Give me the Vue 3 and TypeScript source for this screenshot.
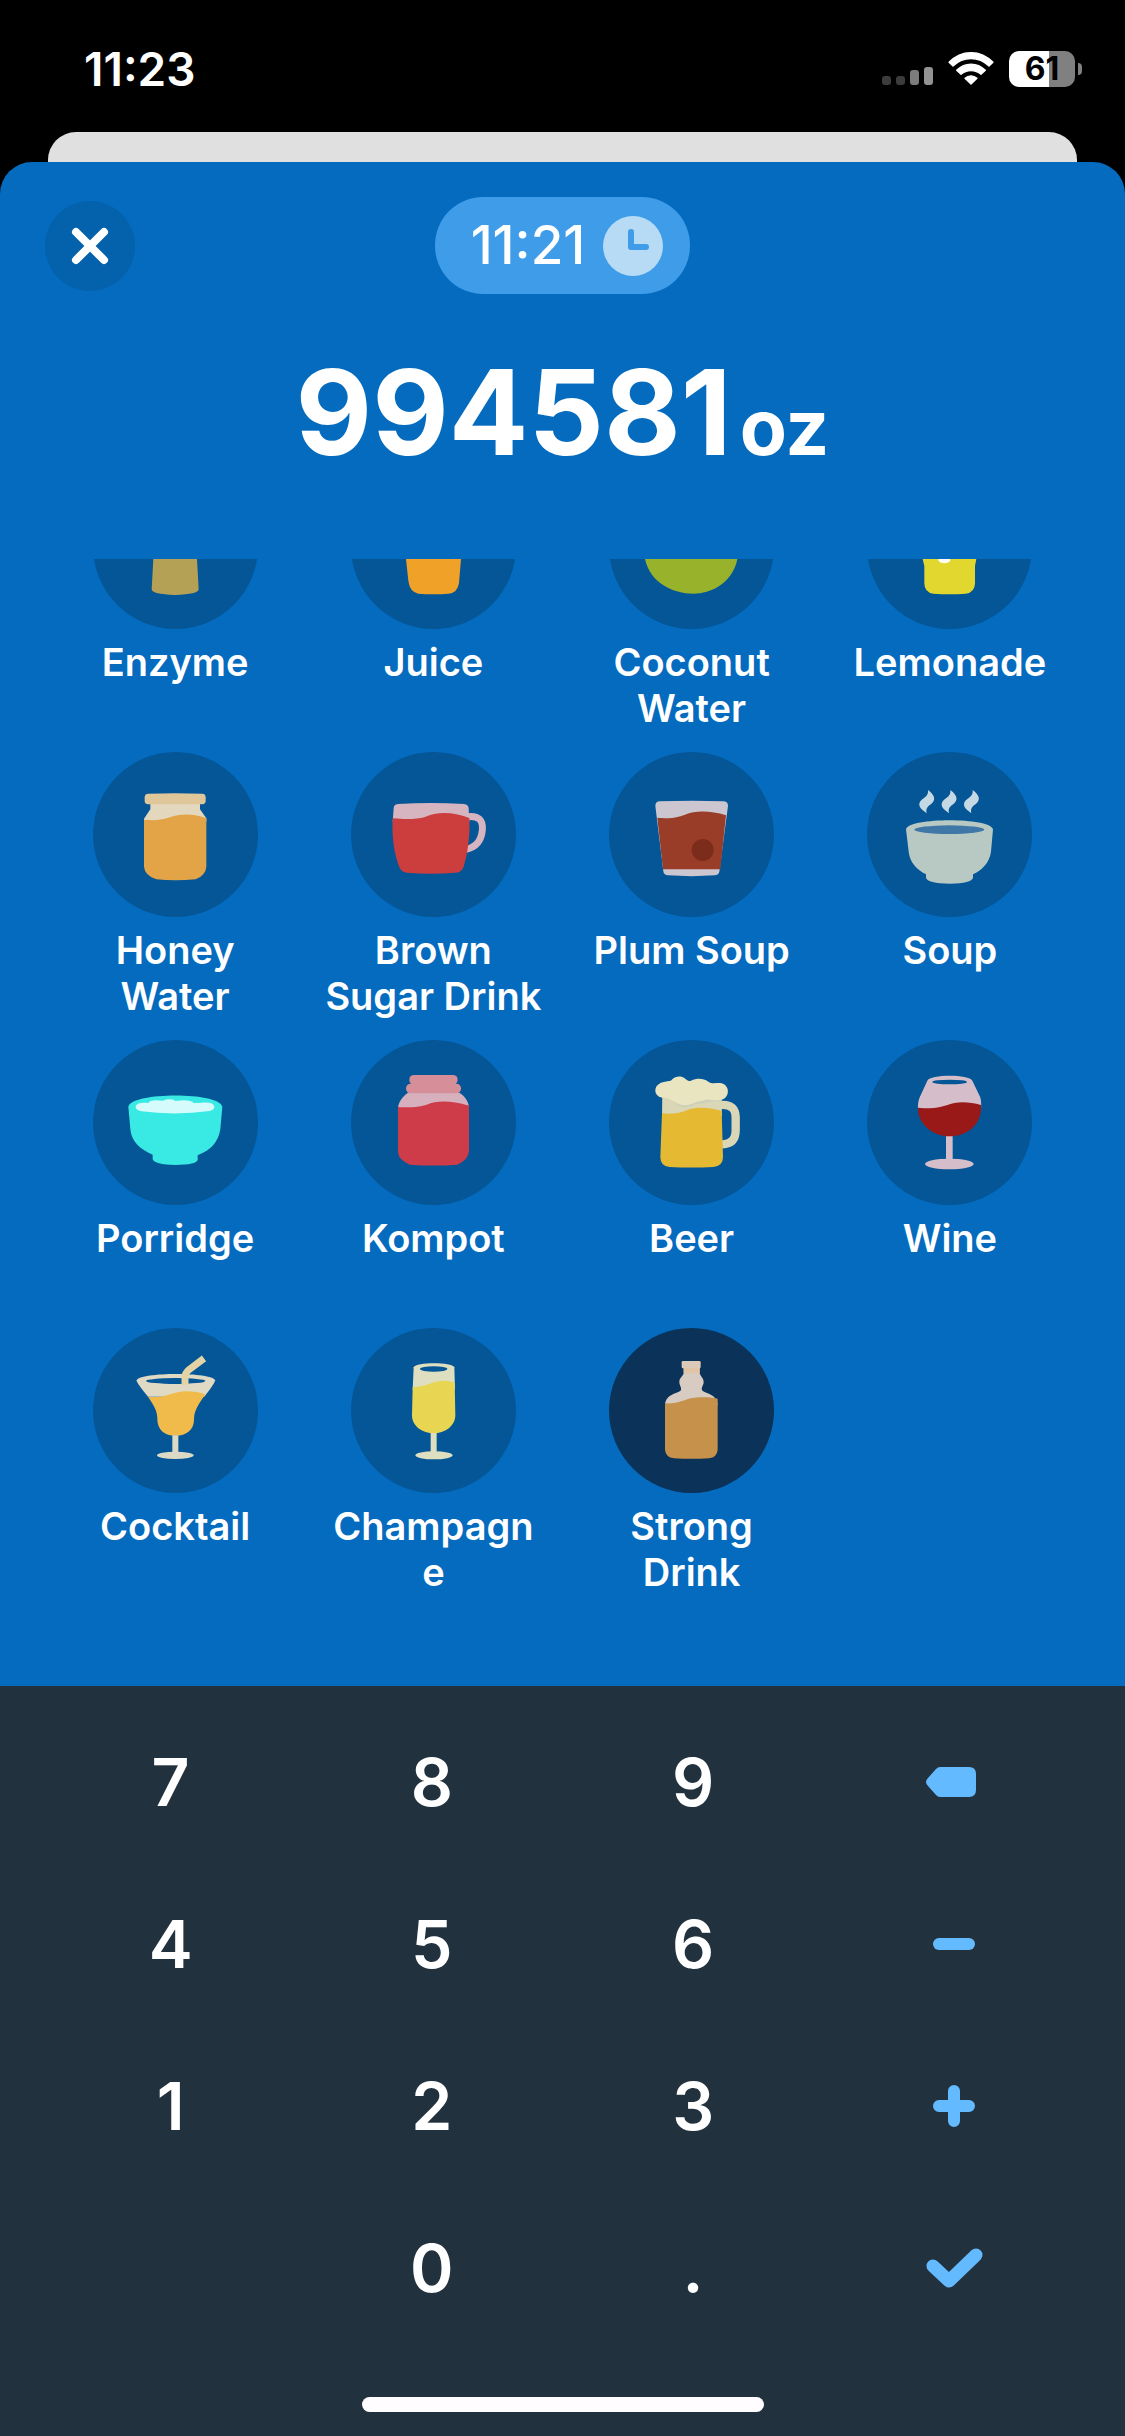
<script setup lang="ts">
import { onMounted, ref } from 'vue'

interface Layer {
  d: string
  fill?: string
  stroke?: string
  width?: number
}

interface Drink {
  name: string
  box: string
  layers: Layer[]
}

type KeyIcon = 'erase' | 'minus' | 'plus' | 'check'

interface Key {
  label: string
  icon?: KeyIcon
  blank?: boolean
}

const SHADE = '#045697'

const oval = (cx: number, cy: number, rx: number, ry: number): string =>
  `M${cx - rx} ${cy}a${rx} ${ry} 0 1 0 ${rx * 2} 0a${rx} ${ry} 0 1 0 ${-rx * 2} 0Z`

const block = (x: number, y: number, w: number, h: number, r: number): string =>
  `M${x + r} ${y}h${w - 2 * r}a${r} ${r} 0 0 1 ${r} ${r}v${h - 2 * r}a${r} ${r} 0 0 1 ${-r} ${r}h${2 * r - w}a${r} ${r} 0 0 1 ${-r} ${-r}v${2 * r - h}a${r} ${r} 0 0 1 ${r} ${-r}Z`

const steam = (dx: number): string =>
  `M${1044 + dx} 150c28 22 20 35 4 46c-9 8 -10 14 -8 24c-30 -20 -26 -33 -9 -45c12 -9 14 -15 13 -25Z`

const drinks: Drink[] = [
  {
    name: 'Enzyme',
    box: '100 -228 495 495',
    layers: [{ d: 'M284 0H409L412 57L417 148Q416 163 346 165Q277 163 276 148L281 57Z', fill: '#b5a156' }],
  },
  {
    name: 'Juice',
    box: '873 -228 495 495',
    layers: [{ d: 'M1032 -40H1209L1203 57L1197 128Q1193 158 1166 161Q1120 164 1075 161Q1049 155 1045 122L1038 57Z', fill: '#f0a228' }],
  },
  {
    name: 'Coconut Water',
    box: '87 -228 495 495',
    layers: [{ d: 'M190 20H475C478 120 400 161 340 161C270 161 188 118 192 20Z', fill: '#98b22b' }],
  },
  {
    name: 'Lemonade',
    box: '861 -228 495 495',
    layers: [
      { d: 'M1020 0L1028 57L1033 78V130Q1033 158 1060 161Q1110 164 1157 161Q1185 158 1185 130V78L1189 57L1196 0Z', fill: '#e1d72f' },
      { d: oval(1093, 60, 18, 10), fill: '#ffffff' },
    ],
  },
  {
    name: 'Honey Water',
    box: '100 36 495 495',
    layers: [
      { d: 'M272 190H421V208L440 235V246H253V236L272 208Z', fill: '#e3d8bd' },
      { d: 'M255 172Q255 162 265 161Q346 158 428 161Q438 162 438 172V182Q438 192 428 193H265Q255 192 255 182Z', fill: '#e0c79a' },
      { d: 'M253 239C290 243 310 238 335 230C370 219 410 222 440 235V380Q438 406 408 418Q346 424 290 418Q255 406 253 380Z', fill: '#e3a447' },
    ],
  },
  {
    name: 'Brown Sugar Drink',
    box: '873 36 495 495',
    layers: [
      { d: 'M1224 230C1256 226 1270 242 1267 270C1264 302 1248 322 1218 328', stroke: '#d6b4c0', width: 21 },
      { d: 'M1001 205Q1001 193 1014 192Q1113 186 1212 192Q1225 193 1226 205L1228 245H998Z', fill: '#d6b4c0' },
      { d: 'M998 235C1040 239 1070 238 1095 231C1130 216 1175 214 1228 234C1231 290 1222 345 1211 380Q1205 396 1188 398Q1113 404 1040 398Q1024 396 1018 382C1002 340 995 290 998 235Z', fill: '#cb3e3d' },
    ],
  },
  {
    name: 'Plum Soup',
    box: '87 36 495 495',
    layers: [
      { d: 'M226 198Q226 185 238 184Q335 180 432 184Q444 185 444 198L418 395Q416 405 404 406Q335 411 264 406Q251 405 250 394Z', fill: '#ccc6d0' },
      { d: 'M232 233C275 237 290 232 315 224C345 212 390 211 438 226L421 388H249Z', fill: '#9a3d28' },
      { d: oval(368, 330, 33, 33), fill: '#7c2c1b' },
    ],
  },
  {
    name: 'Soup',
    box: '861 36 495 495',
    layers: [
      { d: steam(0), fill: '#c4d9e3' },
      { d: steam(67), fill: '#c4d9e3' },
      { d: steam(134), fill: '#c4d9e3' },
      { d: 'M978 268C985 232 1232 232 1239 268L1233 335C1228 370 1205 390 1179 403V413Q1175 430 1110 431Q1042 430 1038 413V403C1010 388 990 368 986 335Z', fill: '#b8c9c3' },
      { d: oval(1108, 269, 105, 13), fill: '#3f78a6' },
    ],
  },
  {
    name: 'Porridge',
    box: '100 30 495 495',
    layers: [
      { d: 'M206 230C215 185 480 185 488 230L482 298C476 335 455 360 414 376V390Q410 404 347 405Q284 404 279 388V374C240 358 216 335 212 298Z', fill: '#39e9e3' },
      { d: 'M228 232C228 218 250 217 266 219C270 209 290 210 310 212C330 204 345 210 347 213C370 209 395 209 402 219C425 220 440 214 455 220C468 228 468 238 450 243Q347 257 245 244Q228 240 228 232Z', fill: '#d6fbfc' },
    ],
  },
  {
    name: 'Kompot',
    box: '873 30 495 495',
    layers: [
      { d: 'M1044 188H1198C1214 198 1226 214 1227 234H1014C1016 212 1030 198 1044 188Z', fill: '#d6b0bc' },
      { d: block(1048, 135, 145, 29, 14), fill: '#d68e99' },
      { d: block(1038, 161, 165, 29, 14), fill: '#d68e99' },
      { d: 'M1014 231C1050 233 1070 233 1100 224C1130 211 1170 210 1227 227V362Q1226 388 1192 404Q1120 409 1050 404Q1015 390 1014 365Z', fill: '#cf3c49' },
    ],
  },
  {
    name: 'Beer',
    box: '87 30 495 495',
    layers: [
      { d: 'M422 225C455 223 467 237 467 262V300C467 330 452 342 426 343', stroke: '#dad7b7', width: 25 },
      { d: 'M247 185H424L426 260H246Z', fill: '#dad7b7' },
      { d: 'M275 203C285 232 320 240 345 222C365 225 385 212 424 212V190H275Z', fill: '#cfd0b9' },
      { d: 'M246 250C280 253 300 249 325 239C350 231 385 231 425 243L429 382Q429 408 400 411Q335 414 268 411Q241 408 241 382Z', fill: '#e5b931' },
      { d: 'M247 203C218 198 218 160 255 155C265 154 273 154 277 148C287 137 305 137 314 145C320 150 325 155 333 152C350 144 370 144 385 155C395 162 405 159 420 159C452 162 452 207 420 210C400 213 385 203 368 212C340 215 335 228 305 225C280 218 275 203 247 203Z', fill: '#e9e5c1' },
    ],
  },
  {
    name: 'Wine',
    box: '861 30 495 495',
    layers: [
      { d: 'M1042 152C1050 132 1168 132 1177 152L1199 198C1204 208 1204 220 1203 240H1014C1013 215 1018 204 1022 196Z', fill: '#d5beca' },
      { d: oval(1109, 156, 52, 7), fill: SHADE },
      { d: block(1098, 312, 20, 84, 0), fill: '#d5beca' },
      { d: oval(1108, 402, 73, 16), fill: '#d5beca' },
      { d: 'M1014 233C1050 236 1070 236 1100 226C1130 213 1165 214 1203 225C1207 285 1160 319 1109 319C1055 318 1013 280 1014 233Z', fill: '#981918' },
    ],
  },
  {
    name: 'Cocktail',
    box: '0 0 495 495',
    layers: [
      { d: 'M131 157C140 132 358 132 366 157Q366 166 334 206H165Q131 166 131 157Z', fill: '#e0dac4' },
      { d: oval(248, 159, 89, 9), fill: SHADE },
      { d: 'M276 170V148Q276 135 288 125L333 91', stroke: '#e3d3a5', width: 21 },
      { d: 'M165 206C205 210 215 203 245 195C275 186 310 190 337 199C320 225 303 245 303 275C303 305 280 323 248 323C214 323 193 305 193 272C193 245 180 230 165 206Z', fill: '#f1bb4b' },
      { d: block(238, 322, 18, 56, 0), fill: '#dcdac5' },
      { d: oval(247, 382, 55, 11), fill: '#dcdac5' },
    ],
  },
  {
    name: 'Champagne',
    box: '0 0 495 495',
    layers: [
      { d: 'M188 118C195 102 303 102 310 118L312 185H185Z', fill: '#dedfc0' },
      { d: oval(248, 123, 41, 8), fill: SHADE },
      { d: 'M185 178C210 176 225 172 240 166C260 157 285 156 311 164L313 262C313 295 280 316 249 316C215 316 183 295 183 262Z', fill: '#e8d653' },
      { d: block(239, 315, 18, 62, 0), fill: '#dedfc0' },
      { d: oval(249, 382, 56, 12), fill: '#dedfc0' },
    ],
  },
  {
    name: 'Strong Drink',
    box: '0 0 495 495',
    layers: [
      { d: 'M224 118H272V136C274 145 284 150 284 162C284 172 276 178 279 186C285 198 324 194 326 232H168C170 194 210 198 216 186C218 178 211 172 211 162C211 150 222 145 224 136Z', fill: '#d8cbc1' },
      { d: block(224, 118, 48, 18, 0), fill: '#e0c4a4' },
      { d: block(218, 99, 57, 22, 4), fill: '#ddc9b8' },
      { d: 'M168 226C200 228 215 220 235 214C260 206 300 207 326 212V365Q324 388 300 391Q248 394 195 391Q170 388 168 365Z', fill: '#c6914b' },
    ],
  },
]

const keys: Key[] = [
  { label: '7' },
  { label: '8' },
  { label: '9' },
  { label: 'Erase', icon: 'erase' },
  { label: '4' },
  { label: '5' },
  { label: '6' },
  { label: 'Subtract', icon: 'minus' },
  { label: '1' },
  { label: '2' },
  { label: '3' },
  { label: 'Add', icon: 'plus' },
  { label: '', blank: true },
  { label: '0' },
  { label: '.' },
  { label: 'Confirm', icon: 'check' },
]

const amount = ref('994581')
const selected = ref('Strong Drink')
const list = ref<HTMLElement | null>(null)

function press(key: Key): void {
  if (key.icon === 'erase') amount.value = amount.value.slice(0, -1)
  else if (!key.icon) amount.value += key.label
}

// The chosen drink sits in the last row, so the list opens scrolled to its end.
onMounted(() => {
  if (list.value) list.value.scrollTop = list.value.scrollHeight
})
</script>

<template>
  <div class="screen">
    <div class="status">
      <span class="status-time">11:23</span>
      <div class="status-icons">
        <svg class="signal" viewBox="0 0 51 36" aria-hidden="true">
          <rect x="0" y="25" width="9" height="9" rx="3" fill="#3c3c3c" />
          <rect x="14" y="25" width="9" height="9" rx="3" fill="#3c3c3c" />
          <rect x="28" y="19" width="9" height="15" rx="3" fill="#7c7c7c" />
          <rect x="42" y="16" width="9" height="18" rx="3" fill="#929292" />
        </svg>
        <svg class="wifi" viewBox="264 63 138 108" aria-hidden="true">
          <g fill="#fff" stroke="#fff" stroke-width="4" stroke-linejoin="round">
            <path d="M267 97C304 58 362 58 399 97L387 108C356 78 310 78 279 108Z" />
            <path d="M290 121C315 96 351 96 376 121L363 133C346 118 320 118 303 133Z" />
            <path d="M315 145C326 135 340 135 351 145L333 162Z" />
          </g>
        </svg>
        <div class="battery-wrap">
          <span class="battery">61</span>
          <span class="battery-cap"></span>
        </div>
      </div>
    </div>

    <div class="behind"></div>

    <main class="sheet">
      <header class="top">
        <button class="close" type="button" aria-label="Close">
          <svg viewBox="0 0 38 38" aria-hidden="true">
            <path d="M5 5L33 33M33 5L5 33" stroke="#fff" stroke-width="8" stroke-linecap="round" />
          </svg>
        </button>
        <button class="time-pill" type="button">
          <span>11:21</span>
          <svg viewBox="0 0 60 60" aria-hidden="true">
            <circle cx="30" cy="30" r="30" fill="#b7daf5" />
            <path d="M28 16V31H43" fill="none" stroke="#3e9ce9" stroke-width="6" stroke-linecap="round" stroke-linejoin="round" />
          </svg>
        </button>
      </header>

      <p class="amount">{{ amount }}<span class="unit">oz</span></p>

      <div ref="list" class="list">
        <div class="drinks">
          <button
            v-for="drink in drinks"
            :key="drink.name"
            class="drink"
            :class="{ selected: drink.name === selected }"
            type="button"
            @click="selected = drink.name"
          >
            <svg class="drink-icon" :viewBox="drink.box" aria-hidden="true">
              <path
                v-for="(layer, i) in drink.layers"
                :key="i"
                :d="layer.d"
                :fill="layer.fill ?? 'none'"
                :stroke="layer.stroke"
                :stroke-width="layer.width"
              />
            </svg>
            <span class="drink-name">{{ drink.name }}</span>
          </button>
        </div>
      </div>
    </main>

    <section class="keypad">
      <div class="keys">
        <template v-for="(key, i) in keys" :key="i">
          <span v-if="key.blank"></span>
          <button v-else class="key" type="button" :aria-label="key.label" @click="press(key)">
            <svg v-if="key.icon === 'erase'" class="erase" viewBox="0 0 56 30" aria-hidden="true">
              <path d="M14 0H43Q50 0 50 7V23Q50 30 43 30H14Q12 30 10 28L2 19Q-2 15 2 11L10 2Q12 0 14 0Z" fill="#64baff" />
            </svg>
            <svg v-else-if="key.icon === 'minus'" class="sign" viewBox="0 0 42 42" aria-hidden="true">
              <path d="M6 21H36" stroke="#64baff" stroke-width="12" stroke-linecap="round" />
            </svg>
            <svg v-else-if="key.icon === 'plus'" class="sign" viewBox="0 0 42 42" aria-hidden="true">
              <path d="M6 21H36M21 6V36" stroke="#64baff" stroke-width="12" stroke-linecap="round" />
            </svg>
            <svg v-else-if="key.icon === 'check'" class="check" viewBox="0 0 57 40" aria-hidden="true">
              <path d="M7 18L23 33L50 7" fill="none" stroke="#64baff" stroke-width="13" stroke-linecap="round" stroke-linejoin="round" />
            </svg>
            <template v-else>{{ key.label }}</template>
          </button>
        </template>
      </div>
      <div class="home"></div>
    </section>
  </div>
</template>

<style>
body {
  margin: 0;
  background: #000;
}
</style>

<style scoped>
.screen {
  display: flex;
  flex-direction: column;
  height: 100vh;
  background: #000;
  color: #fff;
  font-family: Inter, "Liberation Sans", sans-serif;
}

button {
  padding: 0;
  border: 0;
  background: none;
  color: inherit;
  font: inherit;
}

svg {
  display: block;
}

.status {
  display: flex;
  justify-content: space-between;
  align-items: center;
  padding: 51px 43px 45px 84px;
}

.status-time {
  font-size: 46px;
  font-weight: 600;
  line-height: 36px;
}

.status-icons {
  display: flex;
  align-items: center;
  gap: 15px;
}

.signal {
  width: 51px;
  height: 36px;
}

.wifi {
  width: 46px;
  height: 36px;
}

.battery-wrap {
  display: flex;
  align-items: center;
  gap: 3px;
}

.battery {
  width: 66px;
  border-radius: 10px;
  background: linear-gradient(to right, #fff 61%, #808080 61%);
  color: #000;
  font-size: 32px;
  font-weight: 700;
  line-height: 36px;
  text-align: center;
}

.battery-cap {
  width: 4px;
  height: 12px;
  border-radius: 0 4px 4px 0;
  background: #808080;
}

.behind {
  height: 30px;
  margin: 0 48px;
  border-radius: 28px 28px 0 0;
  background: #e0e0e1;
}

.sheet {
  display: flex;
  flex: 1;
  flex-direction: column;
  min-height: 0;
  border-radius: 32px 32px 0 0;
  background: #046bbf;
}

.top {
  display: grid;
  grid-template-columns: 1fr auto 1fr;
  align-items: center;
  padding: 35px 45px 0;
}

.close {
  display: grid;
  place-items: center;
  width: 90px;
  height: 90px;
  border-radius: 50%;
  background: #0461ab;
}

.close svg {
  width: 38px;
  height: 38px;
}

.time-pill {
  display: flex;
  align-items: center;
  gap: 18px;
  padding: 0 27px 0 36px;
  border-radius: 48px;
  background: #3e9ce9;
  font-size: 53px;
  font-weight: 500;
  line-height: 97px;
}

.time-pill svg {
  width: 60px;
  height: 60px;
}

.amount {
  display: flex;
  justify-content: center;
  align-items: baseline;
  gap: 8px;
  margin: 0;
  padding-bottom: 29px;
  font-size: 118px;
  font-weight: 700;
  line-height: 236px;
}

.unit {
  font-size: 77px;
  line-height: 80px;
}

.list {
  flex: 1;
  min-height: 0;
  overflow-y: auto;
  scrollbar-width: none;
}

.drinks {
  display: grid;
  grid-template-columns: repeat(4, 1fr);
  row-gap: 21px;
  padding: 0 46px 91px;
}

.drink {
  display: flex;
  flex-direction: column;
  align-items: center;
  gap: 10px;
}

.drink-icon {
  width: 165px;
  height: 165px;
  border-radius: 50%;
  background: #045697;
}

.selected .drink-icon {
  background: #0b3258;
}

.drink-name {
  box-sizing: border-box;
  width: 100%;
  min-height: 92px;
  padding: 0 18px;
  font-size: 38px;
  font-weight: 600;
  line-height: 46px;
  text-align: center;
  overflow-wrap: anywhere;
}

.keypad {
  display: flex;
  flex-direction: column;
  align-items: center;
  padding: 15px 40px 24px;
  background: #22313e;
}

.keys {
  display: grid;
  grid-template-columns: repeat(4, 1fr);
  grid-auto-rows: 162px;
  align-self: stretch;
}

.key {
  display: grid;
  place-items: center;
  font-size: 66px;
  font-weight: 600;
}

.erase {
  width: 56px;
  height: 30px;
}

.sign {
  width: 42px;
  height: 42px;
}

.check {
  width: 57px;
  height: 40px;
}

.home {
  width: 402px;
  height: 15px;
  margin-top: 48px;
  border-radius: 8px;
  background: #fffdff;
}
</style>
